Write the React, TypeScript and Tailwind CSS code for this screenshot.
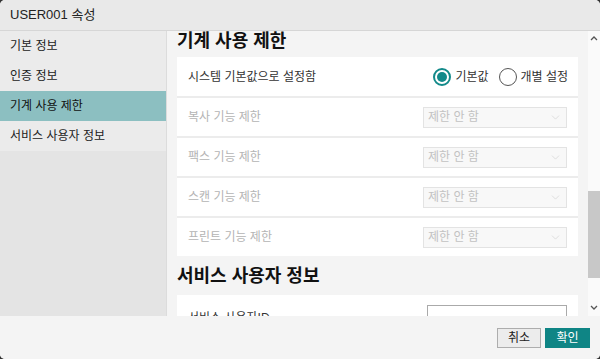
import { ChevronDown } from 'lucide-react'

const menu = [
  { label: '기본 정보', active: false },
  { label: '인증 정보', active: false },
  { label: '기계 사용 제한', active: true },
  { label: '서비스 사용자 정보', active: false },
]

const limits = ['복사 기능 제한', '팩스 기능 제한', '스캔 기능 제한', '프린트 기능 제한']

function Radio({ checked, label }: { checked: boolean; label: string }) {
  return (
    <label className="flex items-center gap-[4px]">
      <span
        className={
          checked
            ? 'w-[18px] h-[18px] rounded-full border-[2px] border-[#138a8a] flex items-center justify-center bg-white'
            : 'w-[18px] h-[18px] rounded-full border-[1.5px] border-[#555] bg-white'
        }
      >
        {checked && <span className="w-[10px] h-[10px] rounded-full bg-[#138a8a]" />}
      </span>
      <span className="text-[12px] text-[#333]">{label}</span>
    </label>
  )
}

function Arrow({ up }: { up?: boolean }) {
  return (
    <svg width="8" height="6" viewBox="0 0 8 6" className="text-[#555]">
      <polyline
        points={up ? '1,5 4,2 7,5' : '1,1 4,4 7,1'}
        fill="none"
        stroke="currentColor"
        strokeWidth="1.3"
      />
    </svg>
  )
}

export default function App() {
  return (
    <div
      className="w-[600px] h-[359px] bg-[#333] overflow-hidden"
      style={{ fontFamily: '"Liberation Sans", "Noto Sans CJK KR", sans-serif' }}
    >
      <div className="w-full h-full rounded-[5px] overflow-hidden flex flex-col bg-[#f4f4f4]">
        {/* Header */}
        <div className="h-[31px] shrink-0 bg-[#e9e9e9] border-b border-[#d6d6d6] flex items-center px-[10px]">
          <span className="text-[13px] text-[#222]">USER001 속성</span>
        </div>

        <div className="flex flex-1 min-h-0">
          {/* Sidebar */}
          <div className="w-[167px] shrink-0 bg-[#e4e4e4] border-r border-[#dcdcdc] flex flex-col">
            {menu.map((m) => (
              <div
                key={m.label}
                className={
                  m.active
                    ? 'h-[30px] flex items-center px-[10px] text-[12px] text-[#111] bg-[#8cbfc1]'
                    : 'h-[30px] flex items-center px-[10px] text-[12px] text-[#222] bg-[#ebebeb]'
                }
              >
                {m.label}
              </div>
            ))}
          </div>

          {/* Content */}
          <div className="flex-1 min-w-0 overflow-hidden px-[10px]">
            <h2 className="h-[20px] leading-[20px] text-[18px] font-bold text-[#111] mb-[6px]">
              기계 사용 제한
            </h2>
            <div className="bg-white">
              <div className="h-[39px] flex items-center justify-between pl-[11px] pr-[10px]">
                <span className="text-[12px] text-[#333]">시스템 기본값으로 설정함</span>
                <div className="flex items-center gap-[10px]">
                  <Radio checked label="기본값" />
                  <Radio checked={false} label="개별 설정" />
                </div>
              </div>
              {limits.map((l) => (
                <div
                  key={l}
                  className="h-[40px] border-t-2 border-[#ececec] flex items-center justify-between pl-[11px] pr-[11px]"
                >
                  <span className="text-[12px] text-[#b4b4b4]">{l}</span>
                  <div className="w-[144px] h-[21px] bg-[#f8f8f8] border border-[#e3e3e3] flex items-center justify-between pl-[4px] pr-[4px]">
                    <span className="text-[12px] text-[#c2c2c2]">제한 안 함</span>
                    <ChevronDown size={13} strokeWidth={1} className="text-[#c8c8c8]" />
                  </div>
                </div>
              ))}
            </div>

            <h2 className="h-[20px] leading-[20px] text-[18px] font-bold text-[#111] mt-[10px] mb-[9px]">
              서비스 사용자 정보
            </h2>
            <div className="bg-white h-[40px] flex items-start justify-between pl-[11px] pr-[11px] pt-[10px]">
              <span className="text-[12px] text-[#333] mt-[4px]">서비스 사용자ID</span>
              <div className="w-[140px] h-[22px] bg-white border border-[#aaa]" />
            </div>
          </div>

          {/* Scrollbar */}
          <div className="w-[12px] shrink-0 bg-[#fafafa] flex flex-col items-center">
            <div className="h-[12px] flex items-center justify-center mt-[1px]">
              <Arrow up />
            </div>
            <div className="flex-1 w-full flex flex-col pt-[147px] pb-[24px]">
              <div className="w-full flex-1 bg-[#c8c8c8]" />
            </div>
            <div className="h-[12px] flex items-center justify-center mb-[2px]">
              <Arrow />
            </div>
          </div>
        </div>

        {/* Footer */}
        <div className="h-[43px] shrink-0 bg-[#f4f4f4] flex items-start justify-end gap-[4px] pr-[10px] pt-[12px]">
          <button className="w-[44px] h-[20px] bg-[#ececec] border border-[#adadad] text-[12px] text-[#222] leading-none">
            취소
          </button>
          <button className="w-[45px] h-[20px] bg-[#0f8585] text-[12px] text-white leading-none">
            확인
          </button>
        </div>
      </div>
    </div>
  )
}
